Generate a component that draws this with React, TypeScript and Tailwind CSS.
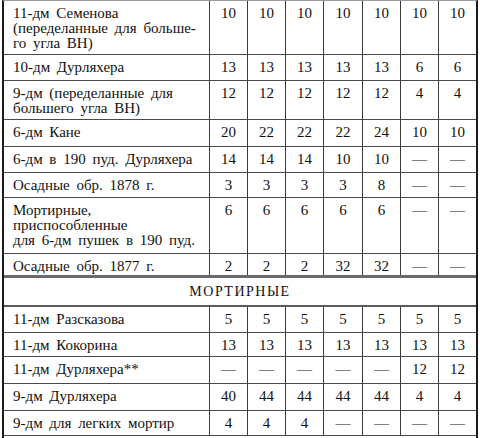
const rows: { label: string[]; values: string[]; h: string }[] = [
  { label: ["11-дм Семенова", "(переделанные для больше-", "го угла ВН)"], values: ["10", "10", "10", "10", "10", "10", "10"], h: "h-[54px]" },
  { label: ["10-дм Дурляхера"], values: ["13", "13", "13", "13", "13", "6", "6"], h: "h-[26px]" },
  { label: ["9-дм (переделанные для", "большего угла ВН)"], values: ["12", "12", "12", "12", "12", "4", "4"], h: "h-[39px]" },
  { label: ["6-дм Кане"], values: ["20", "22", "22", "22", "24", "10", "10"], h: "h-[27px]" },
  { label: ["6-дм в 190 пуд. Дурляхера"], values: ["14", "14", "14", "10", "10", "—", "—"], h: "h-[26px]" },
  { label: ["Осадные обр. 1878 г."], values: ["3", "3", "3", "3", "8", "—", "—"], h: "h-[25px]" },
  { label: ["Мортирные,", "приспособленные", "для 6-дм пушек в 190 пуд."], values: ["6", "6", "6", "6", "6", "—", "—"], h: "h-[56px]" },
];

const lastRow = { label: ["Осадные обр. 1877 г."], values: ["2", "2", "2", "32", "32", "—", "—"] };

const mortars: { label: string; values: string[]; h: string }[] = [
  { label: "11-дм Разсказова", values: ["5", "5", "5", "5", "5", "5", "5"], h: "h-[26px]" },
  { label: "11-дм Кокорина", values: ["13", "13", "13", "13", "13", "13", "13"], h: "h-[24px]" },
  { label: "11-дм Дурляхера**", values: ["—", "—", "—", "—", "—", "12", "12"], h: "h-[27px]" },
  { label: "9-дм Дурляхера", values: ["40", "44", "44", "44", "44", "4", "4"], h: "h-[27px]" },
  { label: "9-дм для легких мортир", values: ["4", "4", "4", "—", "—", "—", "—"], h: "h-[25px]" },
];

const cols = "grid grid-cols-[206px_38px_38px_38px_39px_38px_38px_37px]";

function Cells({ label, values }: { label: string[]; values: string[] }) {
  return (
    <>
      <div className="border-r border-[#3a3a3a] pl-[9px] pt-[5px] leading-[15px] [word-spacing:3px]">
        {label.map((line) => (
          <div key={line}>{line}</div>
        ))}
      </div>
      {values.map((v, i) => (
        <div
          key={i}
          className={`pt-[5px] text-center leading-[15px] ${i < values.length - 1 ? "border-r border-[#3a3a3a]" : ""}`}
        >
          {v}
        </div>
      ))}
    </>
  );
}

export default function App() {
  return (
    <div className="h-[438px] w-[480px] overflow-hidden bg-white font-['Liberation_Serif',serif] text-[15px] text-[#111]">
      <div className="ml-[2px] w-[476px] border-x-2 border-t border-x-[#1a1a1a] border-t-[#9a9a9a]">
        {rows.map((row) => (
          <div key={row.label[0]} className={`${cols} ${row.h} border-b border-[#4a4a4a]`}>
            <Cells label={row.label} values={row.values} />
          </div>
        ))}
        <div className={`${cols} h-[24px] border-b-[3px] border-[#6a6a6a]`}>
          <Cells label={lastRow.label} values={lastRow.values} />
        </div>
        <div className="flex h-[29px] items-center justify-center border-b-2 border-[#5a5a5a] pb-[1px] text-[14px] tracking-[1.5px]">
          МОРТИРНЫЕ
        </div>
        {mortars.map((row) => (
          <div key={row.label} className={`${cols} ${row.h} border-b border-[#4a4a4a]`}>
            <Cells label={[row.label]} values={row.values} />
          </div>
        ))}
        <div className="h-[3px]" />
      </div>
    </div>
  );
}
